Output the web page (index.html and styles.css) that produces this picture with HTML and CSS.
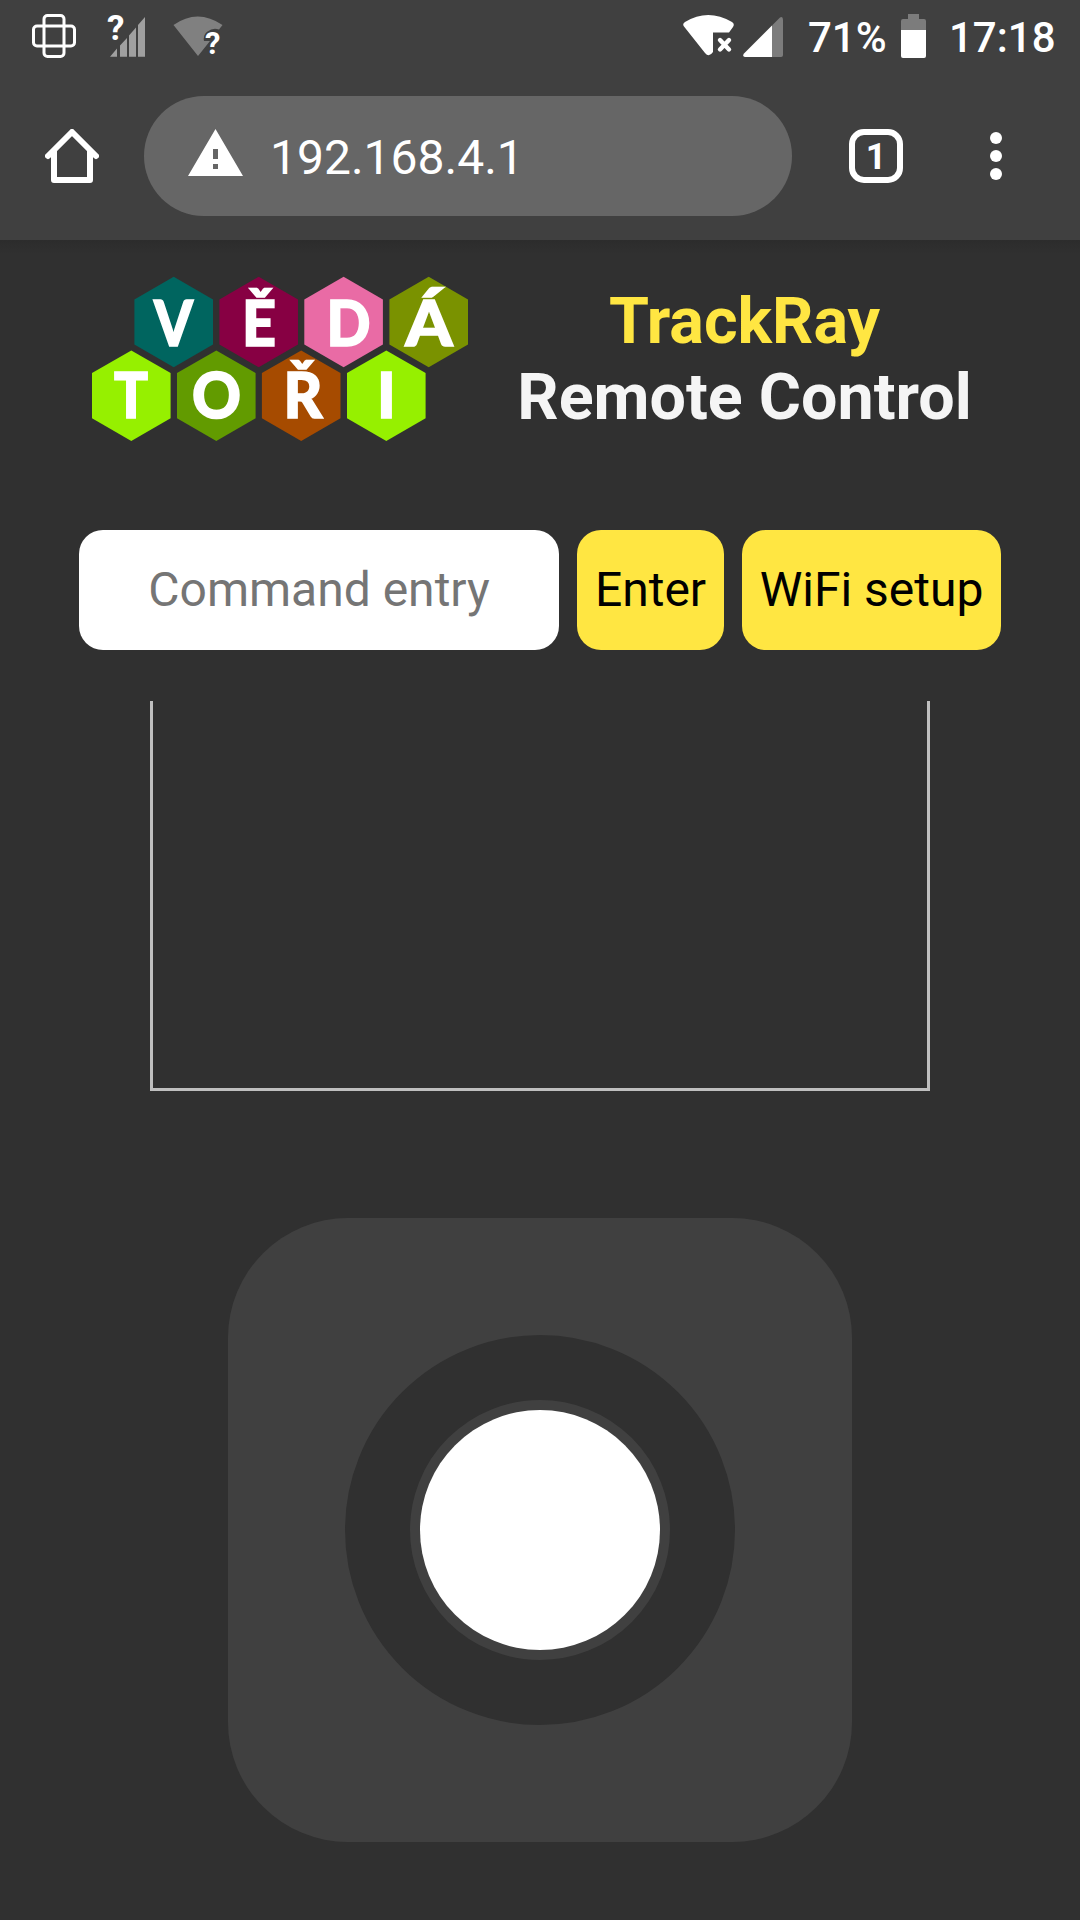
FILE: index.html
```html
<!DOCTYPE html>
<html lang="en">
<head>
<meta charset="utf-8">
<title>TrackRay Remote Control</title>
<link rel="stylesheet" href="styles.css">
</head>
<body>
<div class="status">
  <svg class="status-left" viewBox="0 0 230 72" aria-hidden="true">
    <g class="outline"><rect x="44" y="15.5" width="20" height="41" rx="3.5"/><rect x="33.5" y="26" width="41" height="20" rx="3.5"/></g>
    <path class="muted" d="M110 56.7 117 48.5V56.7ZM120 45.5 127 38V56.7H120ZM129 35.5 136 27.5V56.7H129ZM138 25 145 17V56.7H138Z"/>
    <text class="mark mark-lg" x="107" y="40">?</text>
    <path class="dim" d="M173.500 25Q197.500 8 222.500 25L219 29.500Q213 27 207 32 203 36 204 41H210L198 56Z"/>
    <text class="mark mark-sm" x="205" y="54">?</text>
  </svg>
  <svg class="status-net" viewBox="0 0 102 72" aria-hidden="true">
    <path class="solid" d="M1 26.500Q-1 24 2 22 25 8 49 22 52 24 50 27L46 32.500H30V52Q26 58 22 53Z"/>
    <path class="cross" d="M37 40 46 49.500M46 40 37 49.500"/>
    <path class="faint" d="M89 25.500 97 17.500Q100 16 100 20V55Q100 57 98 57H89Z"/>
    <path class="solid" d="M89 25.500V57H62Q59 56.500 61 53.500Z"/>
  </svg>
  <span class="percent">71%</span>
  <svg class="battery" viewBox="0 0 25 72" aria-hidden="true">
    <path class="faint" d="M7 14H18V19H23Q25 19 25 21V30H0V21Q0 19 2 19H7Z"/>
    <path class="solid" d="M0 30H25V56Q25 58 23 58H2Q0 58 0 56Z"/>
  </svg>
  <span class="clock">17:18</span>
</div>
<header class="toolbar">
  <svg class="home" viewBox="0 0 54 54" aria-label="Home"><path d="M3 27 27 3 51 27M9 22V51H45V22"/></svg>
  <div class="address">
    <svg class="warning" viewBox="0 0 55 47" aria-hidden="true"><path fill-rule="evenodd" d="M27.500 0 55 47H0ZM25 20V30H30V20ZM25 35V40H30V35Z"/></svg>
    <span class="url">192.168.4.1</span>
  </div>
  <span class="tabs">1</span>
  <span class="menu"><i></i><i></i><i></i></span>
</header>
<main>
  <section class="brand">
    <svg class="logo" viewBox="0 0 380 166" aria-label="Vědátoři">
      <defs><path id="hex" d="M0-45.300 39.300-22.600V22.600L0 45.300-39.300 22.600V-22.600Z"/></defs>
      <use href="#hex" x="82.700" y="46" fill="#00655f"/>
      <use href="#hex" x="167.700" y="46" fill="#870043"/>
      <use href="#hex" x="252.600" y="46" fill="#e96ba5"/>
      <use href="#hex" x="337.700" y="46" fill="#7a9200"/>
      <use href="#hex" x="40.300" y="119.700" fill="#96f000"/>
      <use href="#hex" x="125.300" y="119.700" fill="#629b00"/>
      <use href="#hex" x="210.200" y="119.700" fill="#a64b00"/>
      <use href="#hex" x="295.300" y="119.700" fill="#96f000"/>
      <g class="letters">
        <text x="63" y="70" textLength="39" lengthAdjust="spacingAndGlyphs">V</text>
        <text x="151" y="70" textLength="34" lengthAdjust="spacingAndGlyphs">Ě</text>
        <text x="235.500" y="70" textLength="44" lengthAdjust="spacingAndGlyphs">D</text>
        <text x="314.500" y="70" textLength="47" lengthAdjust="spacingAndGlyphs">Á</text>
        <text x="23" y="142" textLength="34" lengthAdjust="spacingAndGlyphs">T</text>
        <text x="101" y="142" textLength="49" lengthAdjust="spacingAndGlyphs">O</text>
        <text x="192.500" y="142" textLength="39" lengthAdjust="spacingAndGlyphs">Ř</text>
        <text x="286" y="142">I</text>
      </g>
    </svg>
    <h1><span class="name">TrackRay</span><span>Remote Control</span></h1>
  </section>
  <form class="controls">
    <input class="command" type="text" placeholder="Command entry">
    <button class="enter" type="button">Enter</button>
    <button class="wifi" type="button">WiFi setup</button>
  </form>
  <div class="console"></div>
  <div class="pad"><div class="ring"><div class="stick"></div></div></div>
</main>
</body>
</html>
```
FILE: styles.css
```css
* { box-sizing: border-box; }
body {
  margin: 0;
  width: 1080px;
  height: 1920px;
  overflow: hidden;
  background: #303030;
  color: #fff;
  font-family: Roboto, sans-serif;
}
svg { display: block; flex: none; }
.status {
  display: flex;
  height: 72px;
  background: #404040;
  font-size: 42px;
  font-weight: 500;
  line-height: 75px;
  white-space: nowrap;
}
.status-left { width: 230px; height: 72px; margin-right: 453px; }
.outline { fill: none; stroke: #fff; stroke-width: 3; }
.muted { fill: #a0a0a0; }
.dim { fill: #808080; }
.faint { fill: #7c7c7c; }
.solid { fill: #fff; }
.mark { fill: #fff; font-weight: 700; }
.mark-lg { font-size: 35px; }
.mark-sm { font-size: 31px; stroke: #404040; stroke-width: 3px; paint-order: stroke; }
.cross { stroke: #fff; stroke-width: 4.4; stroke-linecap: round; }
.status-net { width: 102px; height: 72px; }
.percent { width: 116px; padding-left: 23px; }
.battery { width: 25px; height: 72px; }
.clock { padding-left: 23px; }
.toolbar {
  display: flex;
  align-items: center;
  height: 168px;
  padding: 0 78px 0 45px;
  background: #404040;
}
.home { width: 54px; height: 54px; }
.home path { fill: none; stroke: #fff; stroke-width: 6; stroke-linecap: round; stroke-linejoin: round; }
.address {
  display: flex;
  align-items: center;
  width: 648px;
  height: 120px;
  margin-left: 45px;
  padding-left: 44px;
  border-radius: 60px;
  background: #666;
}
.warning { width: 55px; height: 47px; margin-top: -7px; fill: #fff; }
.url { margin-left: 27px; font-size: 48px; line-height: 56px; padding-top: 3px; }
.tabs {
  width: 54px;
  height: 54px;
  margin-left: 57px;
  border: 6px solid #fff;
  border-radius: 15px;
  font-size: 36px;
  font-weight: 700;
  line-height: 44px;
  text-align: center;
}
.menu { display: flex; flex-direction: column; gap: 6px; margin-left: 87px; }
.menu i { width: 12px; height: 12px; border-radius: 50%; background: #fff; }
main {
  display: flex;
  flex-direction: column;
  align-items: center;
  height: 1680px;
  background: linear-gradient(#2c2c2c, #303030 14px);
}
.brand { display: flex; align-self: stretch; height: 290px; padding: 36px 0 0 91px; }
.logo { width: 380px; height: 166px; }
.letters { fill: #fff; stroke: #fff; stroke-width: 1.6px; font-family: Lato, sans-serif; font-size: 62px; font-weight: 900; }
h1 {
  width: 547px;
  margin: 7px 0 0;
  font-size: 64.6px;
  font-weight: 700;
  line-height: 76px;
  text-align: center;
  color: #f5f5f5;
}
h1 span { display: block; }
h1 .name { color: #ffe642; }
.controls { display: flex; gap: 18px; height: 120px; }
.controls > * {
  border: 0;
  border-radius: 24px;
  padding: 0 0 2px;
  font: 400 48px Roboto, sans-serif;
  text-align: center;
}
.command { width: 480px; background: #fff; }
.command::placeholder { color: #757575; }
.enter { width: 147px; }
.wifi { width: 259px; }
.enter, .wifi { background: #ffe642; color: #000; }
.console {
  width: 780px;
  height: 390px;
  margin-top: 51px;
  border: 3px solid #bfbfbf;
  border-top: 0;
}
.pad, .ring { display: grid; place-items: center; }
.pad { width: 624px; height: 624px; margin-top: 127px; border-radius: 120px; background: #404040; }
.ring { width: 390px; height: 390px; border: 65px solid #303030; border-radius: 50%; }
.stick { width: 240px; height: 240px; border-radius: 50%; background: #fff; }
```
